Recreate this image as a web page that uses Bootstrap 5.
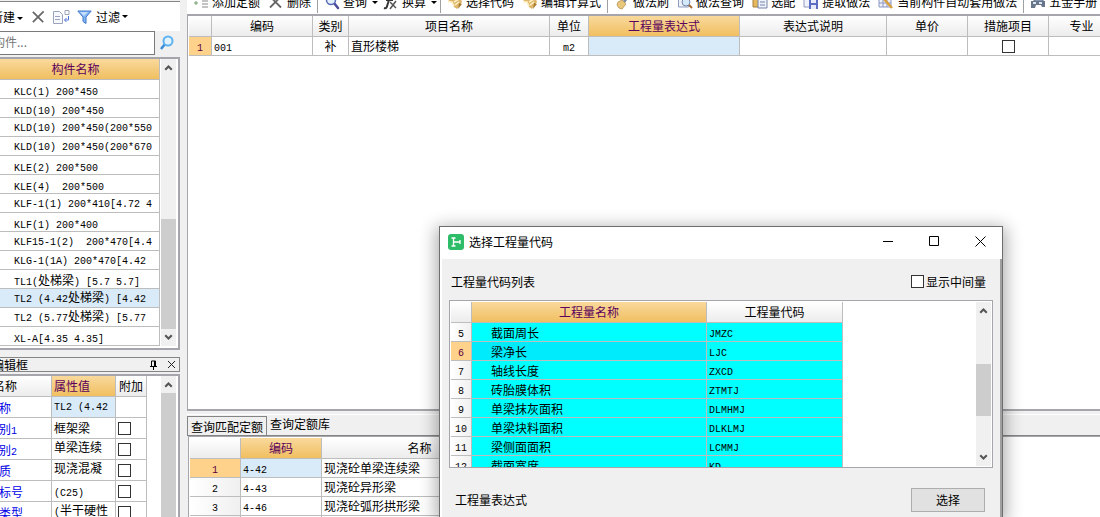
<!DOCTYPE html>
<html lang="zh-CN">
<head>
<meta charset="utf-8">
<meta name="viewport" content="width=device-width, initial-scale=1">
<title>选择工程量代码</title>
<link rel="stylesheet" href="https://cdn.jsdelivr.net/npm/bootstrap@5.3.0/dist/css/bootstrap.min.css">
<style>
body{font-family:"Noto Sans CJK SC",sans-serif;font-size:12px;line-height:16px;color:#000;background:#f0f0f0}
.lat{font-family:"Liberation Mono",monospace;font-size:10px;line-height:0;white-space:pre}
.side{width:180px;flex:none}
.side-tools{height:30px;margin-top:1px;border-top:1px solid #858585;gap:7px}
.side-tools button,.cmd{border:0;background:none;padding:0;color:#000;white-space:nowrap}
.caret{display:inline-block;border:3px solid transparent;border-top-color:#000;border-bottom:0;margin-left:2px;margin-right:1px;vertical-align:middle}
.new-btn{margin-left:-9px}
.find{height:24px;margin-bottom:2px}
.find input{width:187px;margin-left:-32px;border:1px solid #7a7a7a;padding:0 0 2px;background:#fff;color:#777}
.find input::placeholder{color:#777;opacity:1}
.pane{background:#fff;border:2px solid #a5a5ab;border-left:0}
.pane-list{padding-bottom:2px;margin-bottom:7px}
.pane-title{height:15px;border:1px solid #858585;border-left:0;margin-bottom:2px;padding-right:3px}
.pane-title span{margin-left:-32px}
.grid{table-layout:fixed;border-collapse:separate;border-spacing:0;flex:none;line-height:14px}
.grid th,.grid td{height:19px;padding:0 2px;border:0 solid #bdbdbd;border-width:0 1px 1px 0;white-space:nowrap;overflow:hidden;font-weight:400;vertical-align:middle}
.grid thead th{height:21px;text-align:center;background:linear-gradient(#fff,#ececec)}
.grid tbody th{text-align:center;background:linear-gradient(90deg,#fff,#f0f0f0)}
.grid thead th.hot{background:linear-gradient(#f9d99c,#f0bf60);color:#5c005c}
.grid tbody th.hot{background:#ffd28c;color:#5c0040}
.grid td.sel{background:#d9eaf8}
.grid td.mid{text-align:center}
.list{width:168px;margin-left:-8px}
.grid.list td{padding:2px 0 0 22px}
.grid.list td.long{padding-top:0;padding-bottom:2px}
.props{width:212px;margin-left:-65px}
.grid.props td{height:21px}
.grid.props td:first-child{padding:2px 0 0 52px;color:#0000e6}
.grid.props td.high{padding-bottom:4px}
.bar{width:15px;flex:none;background:#f0f0f0}
.side .bar{margin-right:2px}
.bar svg{display:block;flex:none}
.bar i{background:#cdcdcd;display:block;width:15px}
input[type=checkbox]{appearance:none;width:13px;height:13px;border:1px solid #333;background:#fff;display:block;margin:0}
.grid td.mid input{margin:auto}
.main-tools{height:24px;margin-top:-10px;background:#fff}
.cmd{display:flex;align-items:center;padding:0 4px;gap:3px}
.cmd svg{flex:none}
.cmd.drop{padding-right:0}
.sep{width:1px;height:22px;background:#a0a0a0;margin:0 2px;flex:none}
.pane-main{border:solid #a5a5ab;border-width:2px 0 2px 1px;padding-left:1px}
.lower{height:106px;flex:none;padding-top:3px}
.tabs{height:22px;border-top:1px solid #fff;border-bottom:1px solid #858585;padding-top:1px}
.tabs button{border:0;background:none;padding:0 3px 4px;color:#000}
.tabs button.on{border:1px solid #858585;border-bottom:0;padding:2px 3px 0}
.pane-low{border:solid #a5a5ab;border-width:1px 0 0 1px;padding:1px 0 0 1px;margin-left:1px}
.dlg{position:absolute;left:439px;top:226px;bottom:0;width:564px;background:#fff;border:1px solid #6e6e6e;border-bottom:0;box-shadow:0 4px 16px 3px rgba(0,0,0,.32)}
.dlg-title{height:32px;padding:0 16px 3px 8px}
.dlg-title button{border:0;background:none;padding:0;width:11px;height:11px;line-height:0}
.dlg-body{background:#f0f0f0;margin-left:2px;border-right:2px solid #a0a0a0;padding:0 7px}
.dlg-head{height:41px;padding:4px 7px 0 2px}
.codes{height:168px;background:#fff;border:1px solid #a5a5ab;padding:1px}
.codes tbody td{background:#0ff}
.grid.code-table td:nth-child(2){padding:2px 0 0 19px}
.codes tbody td.cur{background:#00ebfb}
.dlg-foot{padding:20px 8px 5px 6px}
.pick{width:74px;height:24px;border:1px solid #adadad;background:#e1e1e1;color:#000;padding:0}
</style>
</head>
<body class="vh-100 overflow-hidden">
<svg class="d-none">
  <symbol id="up" viewBox="0 0 16 17"><path d="M4.500 11 8 7.500 11.500 11" fill="none" stroke="#555" stroke-width="2.200"/></symbol>
  <symbol id="down" viewBox="0 0 16 17"><path d="M4.500 6 8 9.500 11.500 6" fill="none" stroke="#555" stroke-width="2.200"/></symbol>
  <symbol id="cross" viewBox="0 0 16 16"><path d="M2 2.500 13 13.500M13.500 2 2 13.500" fill="none" stroke="#666" stroke-width="1.800"/></symbol>
  <symbol id="lens" viewBox="0 0 16 16"><path d="m10 9 4 5" stroke="#4a4a9a" stroke-width="2.500" stroke-linecap="round"/><circle cx="7" cy="6" r="4.500" fill="#e4f0fc" stroke="#5a6ab8" stroke-width="1.500"/></symbol>
  <symbol id="tag" viewBox="0 0 16 16"><path d="M1 6h5l7-4 2 6-5 7-3-2-2-4z" fill="#dfb76a"/><path d="M1 8h4l2 4M7 8l5-3M8 11l4-3" fill="none" stroke="#fff1c8" stroke-width="1.500"/><path d="m12 9 3 1-4 5z" fill="#a97c30"/></symbol>
  <symbol id="brush" viewBox="0 0 16 16"><path d="m9 7 4-6 2 2-4 6z" fill="#7a88a0"/><path d="m4 8 4-2 4 4-4 5-3-1-2-3z" fill="#e9c77c" stroke="#b08a48" stroke-width=".7"/></symbol>
  <symbol id="pagelens" viewBox="0 0 16 16"><path d="M1.500 1h10v12h-10z" fill="#edf2fb" stroke="#8e9cc0"/><circle cx="9" cy="8" r="4" fill="#d4eafa" stroke="#7688ac"/><path d="m12 11 3 3" stroke="#a86c30" stroke-width="2"/></symbol>
  <symbol id="save" viewBox="0 0 16 16"><path d="M1 2h9v11H1z" fill="#f0f3fb" stroke="#909cc0"/><path d="M6 5h9v10H6z" fill="#5c6ec4"/><path d="M8 5h5v4H8zM8 11h5v4H8z" fill="#e8ecfa"/></symbol>
  <symbol id="match" viewBox="0 0 16 16"><path d="M1 1h8v12H1z" fill="#e6b85c" stroke="#a6803c"/><path d="M6 4h9v10H6z" fill="#eef2fb" stroke="#7484a8"/><path d="M8 8h5M8 11h5" stroke="#7484a8"/></symbol>
</svg>
<div class="d-flex h-100">
  <aside class="side overflow-hidden">
    <div class="side-tools d-flex align-items-center bg-white">
      <button class="new-btn">新建<span class="caret"></span></button>
      <button aria-label="删除"><svg class="d-block" width="15" height="16"><use href="#cross"/></svg></button>
      <button aria-label="复制"><svg class="d-block" width="17" height="16" viewBox="0 0 17 16"><path d="M.500 2.500h6l3 3v9h-9z" fill="#f6f8fc" stroke="#9aa5bd"/><path d="M2 7.500h5M2 10.500h5" stroke="#9aa5bd"/><path d="M12 1.500h4v4h-4z" fill="#fff" stroke="#9aa5bd"/><path d="M15.500 7v4h-4m2-2-2 2 2 2" fill="none" stroke="#5578d8"/></svg></button>
      <button class="d-flex align-items-center"><svg width="15" height="16" viewBox="0 0 15 16"><path d="M.800 2h13.400L9 8v6.500L6 12.500V8z" fill="#82b4f0" stroke="#3f78cd"/><path d="M3 3h8L7 7z" fill="#c4ddfa"/></svg><span class="ms-1">过滤</span><span class="caret"></span></button>
    </div>
    <div class="find d-flex">
      <input type="text" placeholder="　　搜索构件..." aria-label="搜索构件" style="text-indent:-24px">
      <button class="border-0 bg-transparent p-0 ms-1" aria-label="搜索"><svg class="d-block" width="16" height="16" viewBox="0 0 16 16"><path d="m6 9-4 5" stroke="#3a8ed8" stroke-width="2.500"/><circle cx="9" cy="6" r="4.500" fill="#e3f3fd" stroke="#5eb2ee" stroke-width="2"/></svg></button>
    </div>
    <div class="pane pane-list d-flex">
      <table class="grid list">
        <thead><tr><th class="hot">构件名称</th></tr></thead>
        <tbody>
          <tr><td><span class="lat">KLC(1) 200*450</span></td></tr>
          <tr><td><span class="lat">KLD(10) 200*450</span></td></tr>
          <tr><td class="long"><span class="lat">KLD(10) 200*450(200*550</span></td></tr>
          <tr><td class="long"><span class="lat">KLD(10) 200*450(200*670</span></td></tr>
          <tr><td><span class="lat">KLE(2) 200*500</span></td></tr>
          <tr><td><span class="lat">KLE(4)  200*500</span></td></tr>
          <tr><td class="long"><span class="lat">KLF-1(1) 200*410[4.72 4</span></td></tr>
          <tr><td><span class="lat">KLF(1) 200*400</span></td></tr>
          <tr><td class="long"><span class="lat">KLF15-1(2)  200*470[4.4</span></td></tr>
          <tr><td class="long"><span class="lat">KLG-1(1A) 200*470[4.42</span></td></tr>
          <tr><td><span class="lat">TL1(</span>处梯梁<span class="lat">) [5.7 5.7]</span></td></tr>
          <tr><td class="sel long"><span class="lat">TL2 (4.42</span>处梯梁<span class="lat">) [4.42</span></td></tr>
          <tr><td class="long"><span class="lat">TL2 (5.77</span>处梯梁<span class="lat">) [5.77</span></td></tr>
          <tr><td><span class="lat">XL-A[4.35 4.35]</span></td></tr>
        </tbody>
      </table>
      <div class="bar ms-auto d-flex flex-column">
        <svg width="15" height="17"><use href="#up"/></svg>
        <i class="mt-auto" style="height:110px"></i>
        <svg width="15" height="17"><use href="#down"/></svg>
      </div>
    </div>
    <div class="pane-title d-flex align-items-center">
      <span>属性编辑框</span>
      <svg class="ms-auto" width="9" height="10" viewBox="0 0 9 10"><path d="M2.500 6V1h4v5M5.500 1v5M1 6.500h7M4.500 7v3" fill="none" stroke="#000"/></svg>
      <svg style="margin-left:9px" width="9" height="9" viewBox="0 0 9 9"><path d="m1 1 7 7m0-7L1 8" stroke="#222"/></svg>
    </div>
    <div class="pane d-flex">
      <table class="grid props">
        <colgroup><col style="width:117px"><col style="width:64px"><col style="width:31px"></colgroup>
        <thead><tr><th>属性名称</th><th class="hot text-start">属性值</th><th>附加</th></tr></thead>
        <tbody>
          <tr><td>名称</td><td class="sel high"><span class="lat">TL2 (4.42</span></td><td></td></tr>
          <tr><td>类别<span class="lat">1</span></td><td>框架梁</td><td><input type="checkbox" aria-label="类别1"></td></tr>
          <tr><td>类别<span class="lat">2</span></td><td class="high">单梁连续</td><td><input type="checkbox" aria-label="类别2"></td></tr>
          <tr><td>材质</td><td class="high">现浇混凝</td><td><input type="checkbox" aria-label="材质"></td></tr>
          <tr><td>砼标号</td><td><span class="lat">(C25)</span></td><td><input type="checkbox" aria-label="砼标号"></td></tr>
          <tr><td>砼类型</td><td class="high"><span class="lat">(</span>半干硬性</td><td><input type="checkbox" aria-label="砼类型"></td></tr>
        </tbody>
      </table>
      <div class="bar ms-auto d-flex flex-column">
        <svg width="15" height="17"><use href="#up"/></svg>
        <i class="flex-fill"></i>
      </div>
    </div>
  </aside>
  <main class="d-flex flex-column flex-fill overflow-hidden" style="padding-left:7px">
    <div class="main-tools d-flex align-items-center flex-shrink-0">
      <button class="cmd" style="padding-left:6px"><svg width="16" height="16" viewBox="0 0 16 16"><path d="M1 9h4M3 7v4" stroke="#70a070"/><path d="M9 7h6M9 10h6M9 13h6" stroke="#888"/></svg>添加定额</button>
      <button class="cmd"><svg width="16" height="16"><use href="#cross"/></svg>删除</button>
      <span class="sep"></span>
      <button class="cmd drop"><svg width="16" height="16"><use href="#lens"/></svg>查询<span class="caret"></span></button>
      <button class="cmd drop"><svg width="16" height="16" viewBox="0 0 16 16"><path d="M1 14c3 1 3-2 4-5l2-7M3 6h7" fill="none" stroke="#333" stroke-width="2"/><path d="m7 8 6 6m0-7-6 8" stroke="#555" stroke-width="1.500"/></svg>换算<span class="caret"></span></button>
      <span class="sep"></span>
      <button class="cmd"><svg width="16" height="16"><use href="#tag"/></svg>选择代码</button>
      <button class="cmd"><svg width="16" height="16"><use href="#tag"/></svg>编辑计算式</button>
      <span class="sep"></span>
      <button class="cmd"><svg width="16" height="16"><use href="#brush"/></svg>做法刷</button>
      <button class="cmd"><svg width="16" height="16"><use href="#pagelens"/></svg>做法查询</button>
      <button class="cmd"><svg width="16" height="16"><use href="#match"/></svg>选配</button>
      <button class="cmd"><svg width="16" height="16"><use href="#save"/></svg>提取做法</button>
      <button class="cmd"><svg width="16" height="16" viewBox="0 0 16 16"><path d="M1 1h12v12H1zM1 5h12M1 9h12M5 1v12M9 1v12" fill="#eef1fb" stroke="#8a96c4"/><path d="m6 5 8 9" stroke="#d8a040" stroke-width="2.500"/></svg>当前构件自动套用做法</button>
      <span class="sep"></span>
      <button class="cmd"><svg width="16" height="16" viewBox="0 0 16 16"><path d="M4 1h9v6H4z" fill="#a8bcd8" stroke="#5e6c84"/><path d="M1 7h14v6h-3l-1-2H6l-1 3H1z" fill="#68768c"/><path d="M3 9h3M9 9h3" stroke="#dde5f0" stroke-width="2"/></svg>五金手册</button>
    </div>
    <section class="pane-main bg-white flex-fill overflow-hidden">
      <table class="grid" style="width:926px">
        <colgroup><col style="width:23px"><col style="width:101px"><col style="width:36px"><col style="width:201px"><col style="width:39px"><col style="width:151px"><col style="width:147px"><col style="width:81px"><col style="width:81px"><col style="width:66px"></colgroup>
        <thead><tr><th></th><th>编码</th><th>类别</th><th>项目名称</th><th>单位</th><th class="hot">工程量表达式</th><th>表达式说明</th><th>单价</th><th>措施项目</th><th>专业</th></tr></thead>
        <tbody><tr><th class="hot"><span class="lat">1</span></th><td><span class="lat">001</span></td><td class="mid">补</td><td>直形楼梯</td><td class="mid"><span class="lat">m2</span></td><td class="sel"></td><td></td><td></td><td class="mid"><input type="checkbox" aria-label="措施项目"></td><td></td></tr></tbody>
      </table>
    </section>
    <section class="lower d-flex flex-column overflow-hidden">
      <div class="tabs d-flex flex-shrink-0">
        <button class="on">查询匹配定额</button><button>查询定额库</button>
      </div>
      <div class="pane-low bg-white flex-fill">
        <table class="grid" style="width:328px">
          <colgroup><col style="width:51px"><col style="width:81px"><col style="width:196px"></colgroup>
          <thead><tr><th></th><th class="hot">编码</th><th>名称</th></tr></thead>
          <tbody>
            <tr><th class="hot"><span class="lat">1</span></th><td class="sel"><span class="lat">4-42</span></td><td>现浇砼单梁连续梁</td></tr>
            <tr><th><span class="lat">2</span></th><td><span class="lat">4-43</span></td><td>现浇砼异形梁</td></tr>
            <tr><th><span class="lat">3</span></th><td><span class="lat">4-46</span></td><td>现浇砼弧形拱形梁</td></tr>
            <tr><th></th><td></td><td></td></tr>
          </tbody>
        </table>
      </div>
    </section>
  </main>
</div>
<div class="dlg d-flex flex-column" role="dialog" aria-labelledby="dlgname">
  <div class="dlg-title d-flex align-items-center flex-shrink-0">
    <svg width="16" height="16" viewBox="0 0 16 16"><rect width="16" height="16" rx="3" fill="#2dbd68"/><path d="M3.500 4h4M3.500 12h4M5.500 4v8M5.500 8h7M12 6v4" fill="none" stroke="#fff" stroke-width="1.300"/></svg>
    <span id="dlgname" style="margin-left:5px">选择工程量代码</span>
    <div class="ms-auto d-flex" style="gap:35px">
      <button aria-label="最小化"><svg width="11" height="11"><path d="M0 5.500h10" stroke="#000"/></svg></button>
      <button aria-label="最大化"><svg width="11" height="11"><path d="M.500.500h9v9h-9z" fill="none" stroke="#000"/></svg></button>
      <button aria-label="关闭"><svg width="11" height="11"><path d="m.500.500 10 10m0-10-10 10" stroke="#000"/></svg></button>
    </div>
  </div>
  <div class="dlg-body flex-fill overflow-hidden">
    <div class="dlg-head d-flex align-items-center justify-content-between">
      <span>工程量代码列表</span>
      <label class="d-flex align-items-center" for="mid" style="gap:2px"><input type="checkbox" id="mid">显示中间量</label>
    </div>
    <div class="codes d-flex overflow-hidden">
      <table class="grid code-table" style="width:392px">
        <colgroup><col style="width:21px"><col style="width:235px"><col style="width:136px"></colgroup>
        <thead><tr><th></th><th class="hot">工程量名称</th><th>工程量代码</th></tr></thead>
        <tbody>
          <tr><th><span class="lat">5</span></th><td>截面周长</td><td><span class="lat">JMZC</span></td></tr>
          <tr><th class="hot"><span class="lat">6</span></th><td class="cur">梁净长</td><td><span class="lat">LJC</span></td></tr>
          <tr><th><span class="lat">7</span></th><td>轴线长度</td><td><span class="lat">ZXCD</span></td></tr>
          <tr><th><span class="lat">8</span></th><td>砖胎膜体积</td><td><span class="lat">ZTMTJ</span></td></tr>
          <tr><th><span class="lat">9</span></th><td>单梁抹灰面积</td><td><span class="lat">DLMHMJ</span></td></tr>
          <tr><th><span class="lat">10</span></th><td>单梁块料面积</td><td><span class="lat">DLKLMJ</span></td></tr>
          <tr><th><span class="lat">11</span></th><td>梁侧面面积</td><td><span class="lat">LCMMJ</span></td></tr>
          <tr><th><span class="lat">12</span></th><td>截面宽度</td><td><span class="lat">KD</span></td></tr>
        </tbody>
      </table>
      <div class="bar ms-auto d-flex flex-column">
        <svg width="15" height="17"><use href="#up"/></svg>
        <i class="mt-auto" style="height:52px"></i>
        <svg style="margin-top:33px" width="15" height="17"><use href="#down"/></svg>
      </div>
    </div>
    <div class="dlg-foot d-flex align-items-center justify-content-between">
      <span>工程量表达式</span>
      <button class="pick">选择</button>
    </div>
  </div>
</div>
<script src="https://cdn.jsdelivr.net/npm/bootstrap@5.3.0/dist/js/bootstrap.bundle.min.js"></script>
</body>
</html>
